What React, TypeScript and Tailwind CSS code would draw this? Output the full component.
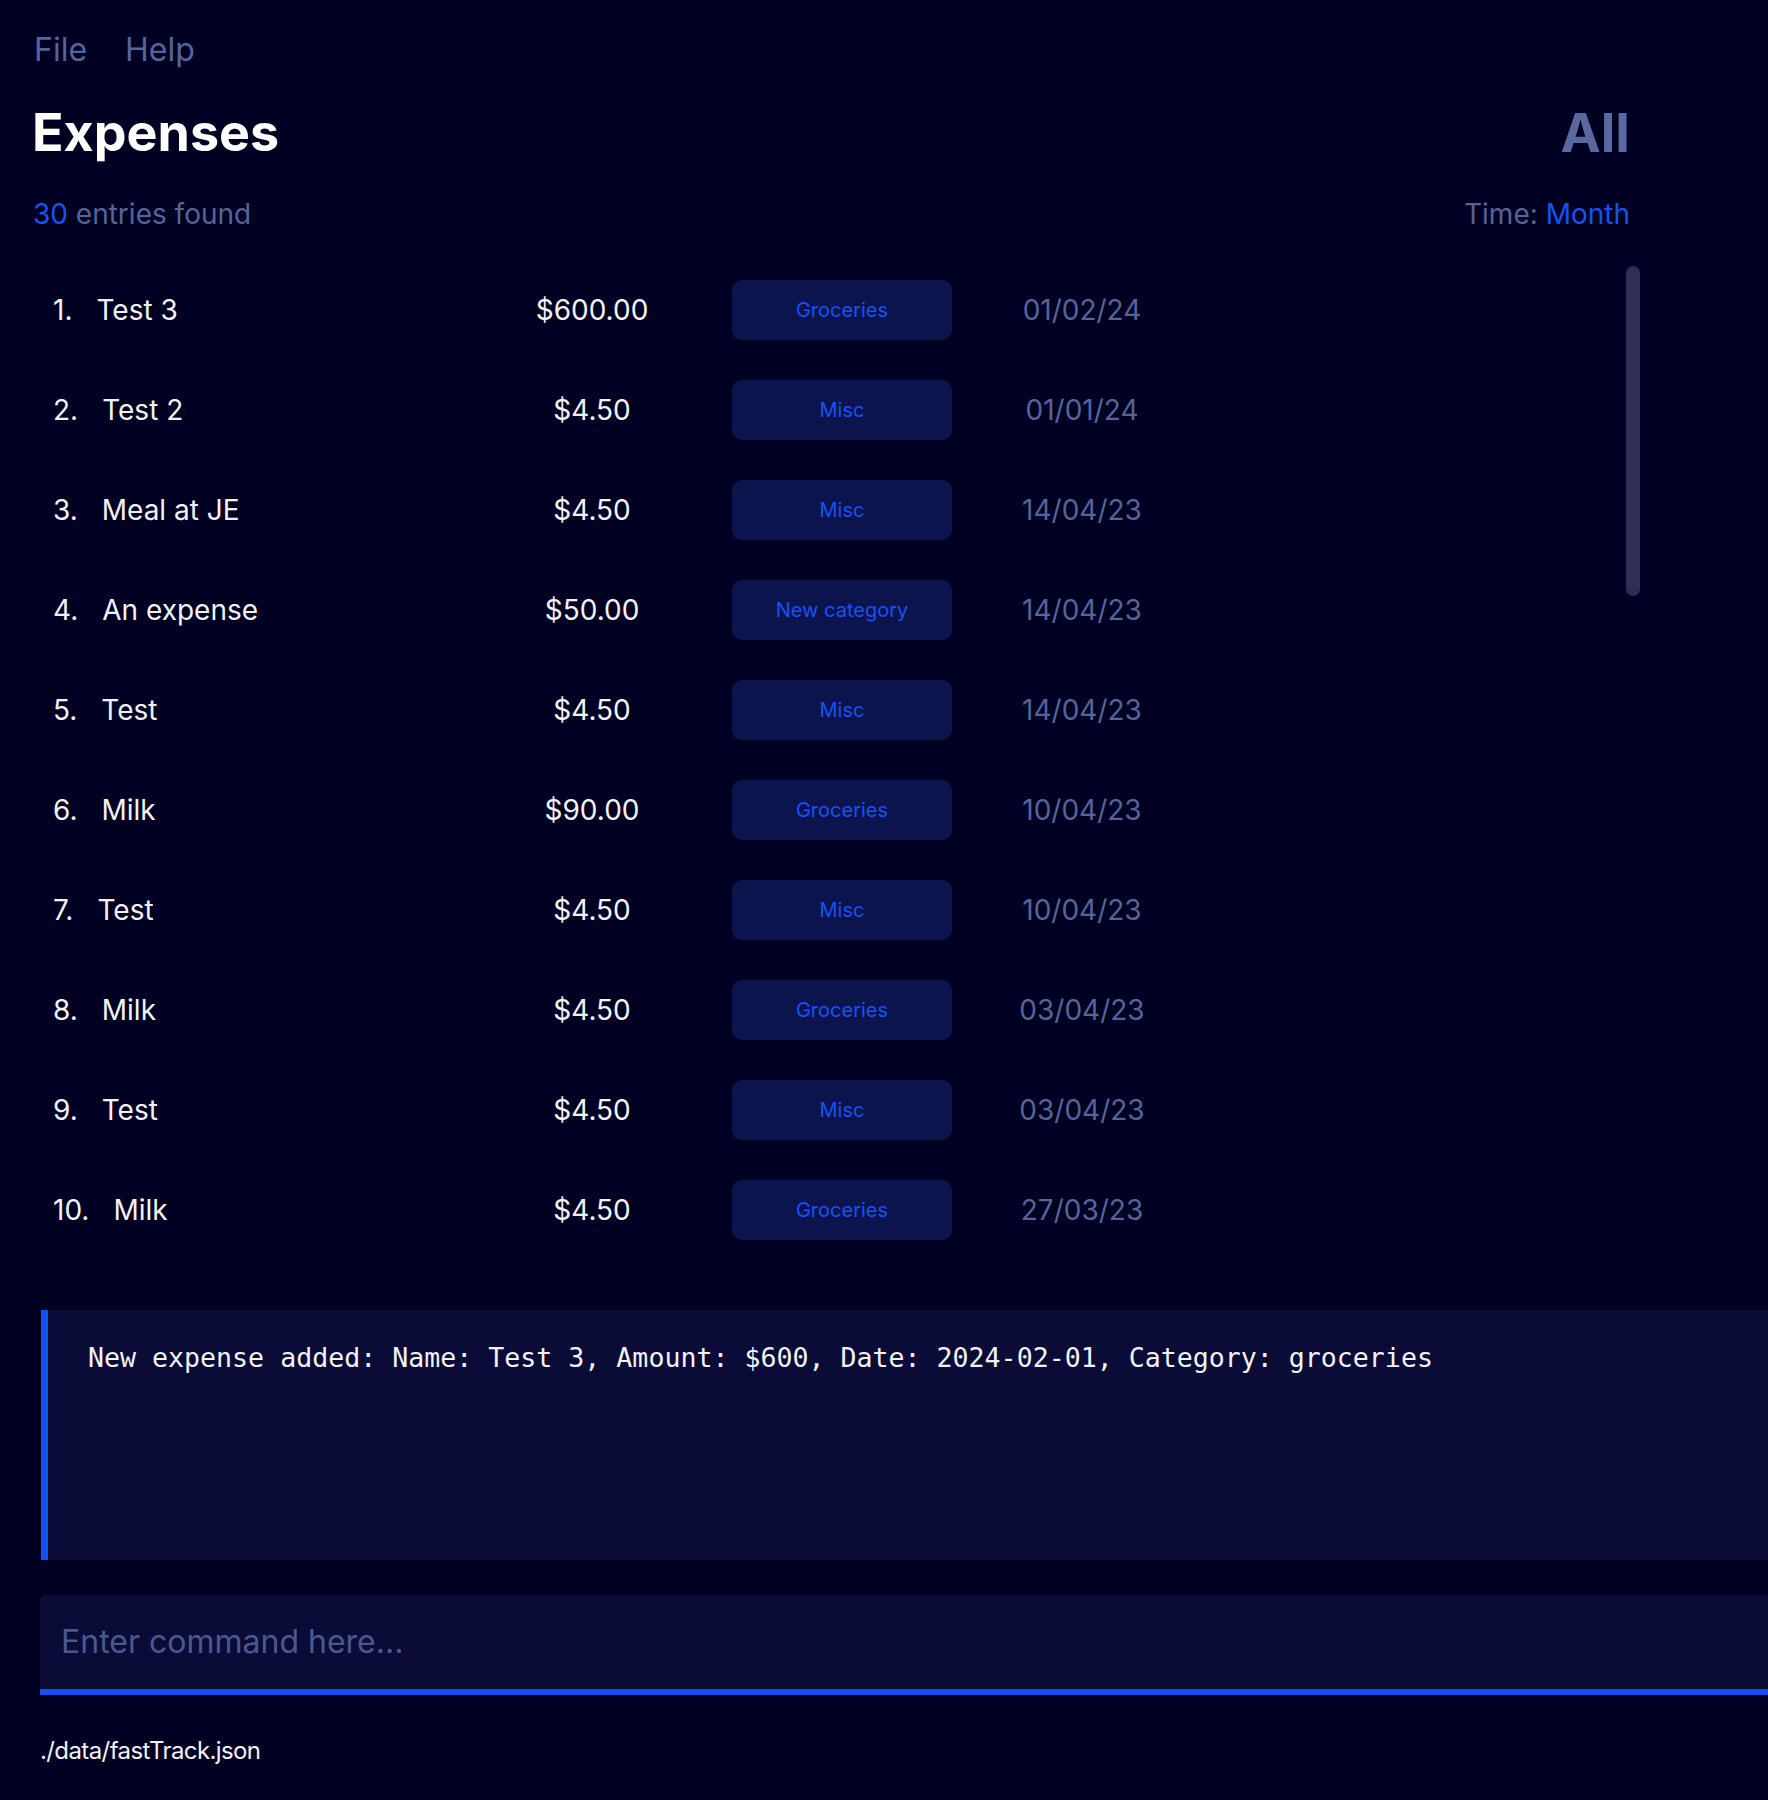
import React from "react";

const rows = [
  { n: 1, name: "Test 3", amt: "$600.00", cat: "Groceries", date: "01/02/24" },
  { n: 2, name: "Test 2", amt: "$4.50", cat: "Misc", date: "01/01/24" },
  { n: 3, name: "Meal at JE", amt: "$4.50", cat: "Misc", date: "14/04/23" },
  { n: 4, name: "An expense", amt: "$50.00", cat: "New category", date: "14/04/23" },
  { n: 5, name: "Test", amt: "$4.50", cat: "Misc", date: "14/04/23" },
  { n: 6, name: "Milk", amt: "$90.00", cat: "Groceries", date: "10/04/23" },
  { n: 7, name: "Test", amt: "$4.50", cat: "Misc", date: "10/04/23" },
  { n: 8, name: "Milk", amt: "$4.50", cat: "Groceries", date: "03/04/23" },
  { n: 9, name: "Test", amt: "$4.50", cat: "Misc", date: "03/04/23" },
  { n: 10, name: "Milk", amt: "$4.50", cat: "Groceries", date: "27/03/23" },
];

export default function App() {
  return (
    <div
      className="w-[1768px] h-[1800px] overflow-hidden bg-[#000022] text-white"
      style={{ fontFamily: "Inter, 'Noto Sans', sans-serif" }}
    >
      {/* menu */}
      <div className="flex gap-[38px] pl-[34px] pt-[30px] h-[102px] text-[32px] leading-[40px] text-[#56649b]">
        <span>File</span>
        <span>Help</span>
      </div>

      {/* header */}
      <div className="flex items-center justify-between pl-[32px] pr-[138px] h-[62px]">
        <span className="text-[52px] leading-[62px] font-bold text-white">Expenses</span>
        <span className="text-[54px] leading-[62px] font-bold text-[#5a68a0]">All</span>
      </div>

      <div className="flex items-center justify-between pl-[33px] pr-[138px] mt-[33px] h-[34px] text-[28px] leading-[34px]">
        <span>
          <span className="text-[#1652f6]">30</span>
          <span className="text-[#56649b]"> entries found</span>
        </span>
        <span>
          <span className="text-[#56649b]">Time: </span>
          <span className="text-[#1652f6]">Month</span>
        </span>
      </div>

      {/* list */}
      <div className="flex mt-[29px] h-[1000px] pl-[33px]">
        <div className="w-[1593px] flex flex-col">
          {rows.map((r) => (
            <div key={r.n} className="flex items-center h-[100px] shrink-0 text-[28px] leading-[34px]">
              <div className="w-[499px] pl-[20px] flex text-[#f2f2f5]">
                <span>{r.n}.</span>
                <span className="ml-[24px]">{r.name}</span>
              </div>
              <div className="w-[120px] text-center text-[#f2f2f5]">{r.amt}</div>
              <div className="ml-[80px] w-[220px] h-[60px] rounded-[10px] bg-[#0b144c] flex items-center justify-center text-[20px] text-[#1552f7]">
                {r.cat}
              </div>
              <div className="w-[260px] text-center text-[#56649b]">{r.date}</div>
            </div>
          ))}
        </div>
        <div className="w-[14px] pt-[6px]">
          <div className="w-[14px] h-[330px] rounded-full bg-[#2e2e56]" />
        </div>
      </div>

      {/* message */}
      <div className="mt-[50px] ml-[41px] w-[1760px] h-[250px] bg-[#0a0b37] border-l-[7px] border-[#1450f0] pl-[40px] pt-[32px]">
        <div
          className="text-[26.6px] leading-[32px] text-[#f2f2f5] whitespace-pre"
          style={{ fontFamily: "'DejaVu Sans Mono', monospace" }}
        >
          New expense added: Name: Test 3, Amount: $600, Date: 2024-02-01, Category: groceries
        </div>
      </div>

      {/* input */}
      <div className="mt-[35px] ml-[40px] w-[1760px] h-[100px] bg-[#0a0b37] rounded-tl-[5px] border-b-[6px] border-[#1450f0] flex items-center pl-[21px]">
        <input
          readOnly
          placeholder="Enter command here..."
          className="w-full bg-transparent outline-none text-[32px] leading-[40px] text-white placeholder:text-[#4a5890]"
        />
      </div>

      <div className="ml-[40px] mt-[41px] text-[24px] leading-[30px] text-[#f2f2f5] tracking-[-0.6px]">
        ./data/fastTrack.json
      </div>
    </div>
  );
}
